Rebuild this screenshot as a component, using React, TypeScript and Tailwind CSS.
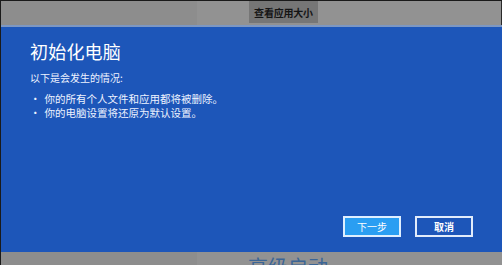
import React from 'react'

const font = { fontFamily: '"Microsoft YaHei", "Noto Sans CJK SC", "Noto Sans", sans-serif' }

export default function App() {
  return (
    <div className="w-[502px] h-[265px] overflow-hidden flex flex-col bg-[#8f8f8f] border-t border-l border-[#1a1a1a]" style={font}>
      {/* top strip */}
      <div className="flex h-[24px] shrink-0">
        <div className="w-[196px] bg-[#8d8d8d]" />
        <div className="flex-1 bg-[#929292] pl-[52px] border-r border-[#2a2a2a]">
          <div className="w-[69px] h-[22px] bg-[#767676] flex items-center justify-center text-[10px] font-bold text-[#151515] tracking-[-0.2px]">
            查看应用大小
          </div>
        </div>
      </div>
      <div className="h-[2px] shrink-0 bg-[#7d97c2]" />

      {/* dialog panel */}
      <div className="h-[225px] shrink-0 bg-[#1d56b9] px-[29px] pt-[12px] flex flex-col text-white">
        <h1 className="text-[18px] leading-[24px] font-normal tracking-[0.2px]">初始化电脑</h1>
        <p className="mt-[8px] text-[10px] leading-[14px] text-[#eef3ff]">以下是会发生的情况:</p>
        <ul className="mt-[7px] text-[10.5px] leading-[13.5px] text-[#eef3ff]">
          <li className="flex gap-[4px]"><span>•</span><span>你的所有个人文件和应用都将被删除。</span></li>
          <li className="flex gap-[4px]"><span>•</span><span>你的电脑设置将还原为默认设置。</span></li>
        </ul>
        <div className="mt-auto mb-[15px] flex justify-end gap-[14px]">
          <button className="w-[58px] h-[21px] bg-[#2a9ef2] border-2 border-[#dfefff] text-[10px] text-white flex items-center justify-center">下一步</button>
          <button className="w-[58px] h-[21px] bg-[#1d56b9] border-2 border-[#e2ecfb] text-[10px] font-bold text-white flex items-center justify-center">取消</button>
        </div>
      </div>

      {/* bottom strip */}
      <div className="flex flex-1">
        <div className="w-[196px] bg-[#8d8d8d]" />
        <div className="flex-1 bg-[#929292] pl-[51px] pt-[3px]">
          <span className="text-[20px] leading-[24px] text-[#3b6596]">高级启动</span>
        </div>
      </div>
    </div>
  )
}
